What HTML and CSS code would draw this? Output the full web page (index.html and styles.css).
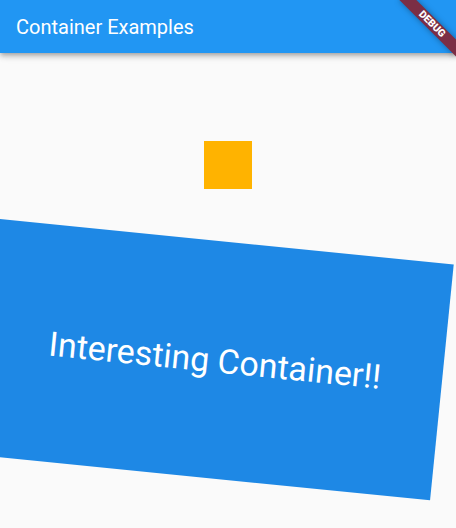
FILE: index.html
```html
<!DOCTYPE html>
<html lang="en">
<head>
<meta charset="utf-8">
<title>Container Examples</title>
<link rel="stylesheet" href="styles.css">
</head>
<body>
  <header class="appbar">
    <h1 class="title">Container Examples</h1>
  </header>
  <main class="content">
    <div class="square"></div>
    <div class="card"><span class="card-text">Interesting Container!!</span></div>
  </main>
  <div class="banner"><span class="banner-text">DEBUG</span></div>
</body>
</html>
```
FILE: styles.css
```css
html, body {
  margin: 0;
  padding: 0;
  width: 456px;
  height: 528px;
  overflow: hidden;
  background: #fafafa;
  font-family: Roboto, "Liberation Sans", sans-serif;
}

.appbar {
  position: relative;
  z-index: 2;
  height: 53px;
  background: #2196f3;
  display: flex;
  align-items: center;
  padding: 0 16px;
  box-shadow: 0 2px 4px -1px rgba(0,0,0,0.2), 0 4px 5px 0 rgba(0,0,0,0.14), 0 1px 10px 0 rgba(0,0,0,0.12);
}

.title {
  margin: 0;
  color: #fff;
  font-size: 20px;
  font-weight: 400;
  line-height: 1;
}

.content {
  display: flex;
  flex-direction: column;
  align-items: center;
  padding-top: 88px;
}

.square {
  width: 48px;
  height: 48px;
  background: #ffb300;
}

.card {
  align-self: stretch;
  margin-top: 30px;
  height: 237.4px;
  background: #1e88e5;
  transform: rotate(0.1rad);
  transform-origin: 0 0;
  display: flex;
  align-items: center;
  justify-content: center;
}

.card-text {
  color: #fff;
  font-size: 34px;
  font-weight: 400;
}

.banner {
  position: absolute;
  z-index: 3;
  left: 416px;
  top: 28px;
  width: 80px;
  height: 12px;
  background: #7b2e45;
  box-shadow: 0 0 6px rgba(0,0,0,0.35);
  transform-origin: 40px -28px;
  transform: rotate(45deg);
  display: flex;
  align-items: center;
  justify-content: center;
}

.banner-text {
  color: #fff;
  font-size: 10.2px;
  font-weight: 900;
  line-height: 1;
}
```
